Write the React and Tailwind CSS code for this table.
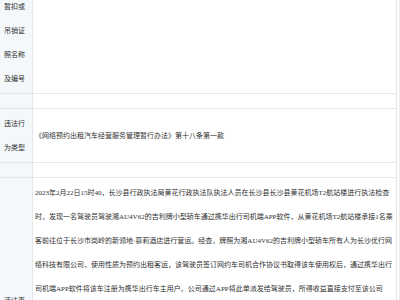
import React from 'react';

// Penalty decision detail: a two-column table, label cells on the left
const border = 'border-[#e6e6e6]';

const facts = [
    '2023年2月22日15时40，长沙县行政执法局黄花行政执法队执法人员在长沙县长沙县黄花机场T2航站楼进行执法检查',
    '时，发现一名驾驶员驾驶湘AU4V62的吉利牌小型轿车通过携华出行司机端APP软件，从黄花机场T2航站楼承接1名乘',
    '客前往位于长沙市岗岭的新领地·慕莉酒店进行营运。经查，牌照为湘AU4V62的吉利牌小型轿车所有人为长沙优行网',
    '络科技有限公司，使用性质为预约出租客运，该驾驶员签订网约车司机合作协议书取得该车使用权后，通过携华出行',
    '司机端APP软件将该车注册为携华出行车主用户。公司通过APP将此单派发给驾驶员，所得收益直接支付至该公司',
    '账户，再由公司按约定比例与驾驶员结算。该车辆未取得网络预约出租汽车运输证，当事人长沙优行网络科技有',
    '限公司的行为违反了《网络预约出租汽车经营服务管理暂行办法》第十八条第一款的规定，执法人员当场制作了现',
    '场笔录，拍摄了照片，并依法对该车辆实施了暂扣。当事人对上述违法事实无异议，并提供了营业执照复印件、',
    '车辆行驶证复印件、网约车司机合作协议书等材料。以上事实有现场笔录、询问笔录、现场照片、当事人营业执',
    '照复印件、车辆行驶证复印件、网约车司机合作协议书及APP派单截图等证据为证，证据确实充分，足以认定。',
    '',
];

const Row = ({ label = [], children, empty = false }) => (
    <div className={`flex border-b ${border} ${empty ? 'h-[15px]' : ''}`}>
        <div className={`w-[33px] shrink-0 bg-[#f4f8fb] border-r ${border} pl-[4px] pt-[3px] pb-[2px] flex flex-col justify-center`}>
            {label.map((line) => (
                <div key={line} className="leading-[24px] whitespace-nowrap">
                    {line}
                </div>
            ))}
        </div>
        <div className="flex-1 pl-[2px] pt-[3px] pb-[2px] flex flex-col justify-center">
            {children}
        </div>
    </div>
);

const App = () => {
    return (
        <div className="w-[400px] h-[300px] overflow-hidden bg-white border-r border-[#ececec] text-[7px] text-[#2f2f2f] font-['Liberation_Serif','Noto_Sans_CJK_SC',serif]">
            <div className={`-mt-[8px] w-[397px] border-r ${border}`}>
                {/* Licence row */}
                <Row label={['暂扣或', '吊销证', '照名称', '及编号']}>
                    <div className="h-[96px]" />
                </Row>
                <Row empty />

                {/* Violation type */}
                <Row label={['违法行', '为类型']}>
                    <div className="leading-[24px] whitespace-nowrap">
                        《网络预约出租汽车经营服务管理暂行办法》第十八条第一款
                    </div>
                </Row>
                <Row empty />

                {/* Facts of the case */}
                <Row label={['违法事', '实']}>
                    {facts.map((line, i) => (
                        <div key={i} className="leading-[24px] h-[24px] whitespace-nowrap">
                            {line}
                        </div>
                    ))}
                </Row>
            </div>
        </div>
    );
};

export default App;
